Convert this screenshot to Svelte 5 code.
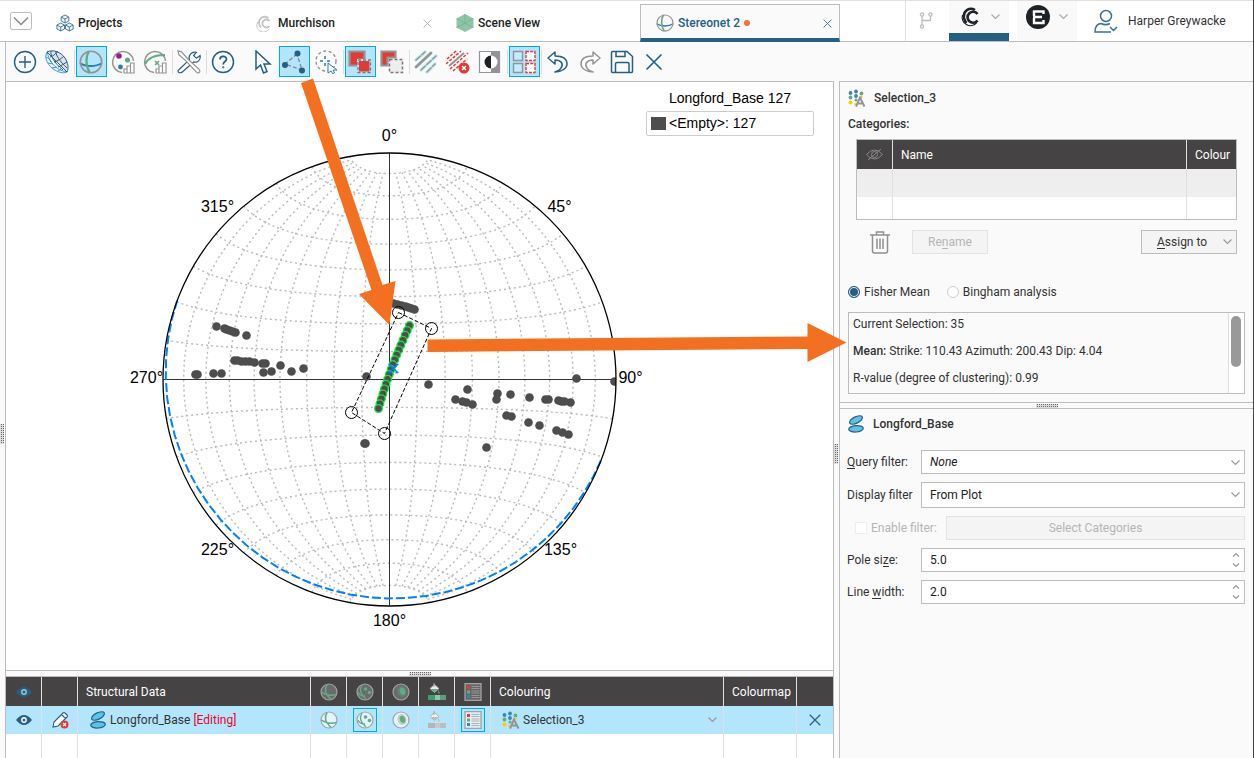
<script>
  const RADIUS = 226.5;
  const MEAN = { strike: 110.43, dip: 4.04 };

  let analysis = $state('fisher');
  let queryFilter = $state('none');
  let displayFilter = $state('plot');
  let poleSize = $state('5.0');
  let lineWidth = $state('2.0');

  const rad = (deg) => (deg * Math.PI) / 180;

  // Lambert equal area, centre at 0,0
  function project(lat, lon) {
    const a = rad(lat);
    const b = rad(lon);
    const k = (RADIUS / Math.SQRT2) * Math.sqrt(2 / (1 + Math.cos(a) * Math.cos(b)));
    return [k * Math.cos(a) * Math.sin(b), -k * Math.sin(a)];
  }

  function toPath(points) {
    return points.map(([x, y], i) => `${i ? 'L' : 'M'}${x.toFixed(1)} ${y.toFixed(1)}`).join('');
  }

  function range(from, to, step) {
    const out = [];
    for (let v = from; v <= to; v += step) out.push(v);
    return out;
  }

  const meridians = range(-80, 80, 10)
    .filter((lon) => lon !== 0)
    .map((lon) => toPath(range(-80, 80, 5).map((lat) => project(lat, lon))));
  const parallels = range(-80, 80, 10)
    .filter((lat) => lat !== 0)
    .map((lat) => toPath(range(-90, 90, 5).map((lon) => project(lat, lon))));

  function greatCircle({ strike, dip }) {
    const s = rad(strike);
    const d = rad(strike + 90);
    return toPath(
      range(-90, 90, 5).map((lat) => {
        const [u, v] = project(lat, 90 - dip);
        return [u * Math.sin(d) - v * Math.sin(s), -u * Math.cos(d) + v * Math.cos(s)];
      })
    );
  }
  const meanPlane = greatCircle(MEAN);

  const labels = [
    { text: '0°', x: 0, y: -239 },
    { text: '45°', x: 170, y: -168 },
    { text: '90°', x: 241, y: 3 },
    { text: '135°', x: 171, y: 175 },
    { text: '180°', x: 0, y: 246 },
    { text: '225°', x: -172, y: 175 },
    { text: '270°', x: -243, y: 3 },
    { text: '315°', x: -172, y: -168 }
  ];

  const poles = [
    [-173, -53], [-165, -51], [-163, -50], [-160, -49], [-157, -48], [-154, -47], [-143, -44],
    [-155, -19], [-152, -19], [-148, -18], [-144, -18], [-140, -18], [-135, -17], [-127, -16],
    [-124, -16], [-126, -7], [-118, -8], [-109, -14], [-98, -8], [-86, -11],
    [-194, -5], [-192, -5], [-176, -6], [-168, -6], [-23, -3], [-25, 64], [-24, 64],
    [4, -76], [8, -75], [12, -74], [16, -73], [19, -72], [22, -71], [25, -70],
    [39, 5], [78, 10], [66, 20], [73, 22], [77, 23], [83, 25], [108, 14], [107, 20],
    [121, 15], [140, 18], [156, 20], [159, 20], [169, 21], [172, 22], [175, 22], [181, 23],
    [187, -1], [225, 2], [117, 36], [122, 37], [139, 43], [150, 46], [167, 51], [173, 53],
    [179, 55], [97, 68]
  ];

  const selected = range(0, 17, 1).map((i) => {
    const t = i / 17;
    return [20 - 31 * t - 2 * Math.sin(Math.PI * t), -54 + 83 * t];
  });
  const lasso = [[9, -67], [42, -51], [-5, 54], [-38, 33]];
</script>

{#snippet chevron(color = '#999')}
  <svg class="chev" width="9" height="6" viewBox="0 0 9 6"><path d="M.5 .5l4 4 4-4" fill="none" stroke={color} stroke-width="1.200" /></svg>
{/snippet}

{#snippet cross(color, size)}
  <svg width={size} height={size} viewBox="0 0 16 16"><path d="M1 1l14 14M15 1L1 15" fill="none" stroke={color} stroke-width="1.6" /></svg>
{/snippet}

{#snippet cubes()}
  <svg width="18" height="18" viewBox="0 0 18 18" fill="#eef4f8" stroke="#3b7196" stroke-width=".9">
    {#each [[9, 1], [4.7, 9], [13.3, 9]] as [x, y]}
      <path d="M{x} {y}l3.8 2v4l-3.8 2-3.8-2v-4zM{x - 3.8} {y + 2}l3.8 2 3.8-2M{x} {y + 4}v4" />
    {/each}
  </svg>
{/snippet}

{#snippet murch()}
  <svg width="18" height="18" viewBox="0 0 18 18" fill="none" stroke="#c4c4c4">
    <path d="M13 15A6.500 6.500 0 0 1 1.800 8" /><path d="M12.500 4C8 1 2.500 4 3 9.500c.2 2 1 3 2 4" stroke-width="1.800" /><path d="M13.500 7a4 4 0 1 0 0 5" stroke-width="1.800" />
  </svg>
{/snippet}

{#snippet cube()}
  <svg width="18" height="18" viewBox="0 0 18 18">
    <path d="M9 0l8.5 4.5v9L9 18 .5 13.500v-9z" fill="#8cc5a8" /><path d="M9 9V0M9 9l8.500 4.500M9 9L.5 13.500M.5 4.500L9 9l8.500-4.500" stroke="#74b394" stroke-width=".8" fill="none" />
  </svg>
{/snippet}

{#snippet net(size)}
  <svg width={size} height={size} viewBox="0 0 24 24" fill="none">
    <path d="M1 13c5 4 16 4 22 0" stroke="#2d7cb0" stroke-width="1.800" />
    <path d="M10 1c-3.500 6-3.500 15 1 22" stroke="#62ab84" stroke-width="2.200" />
    <circle cx="12" cy="12" r="10.700" stroke="#949494" stroke-width="1.600" />
  </svg>
{/snippet}

{#snippet plus()}
  <svg width="24" height="24" viewBox="0 0 24 24" fill="none" stroke="#245f84" stroke-width="1.4"><circle cx="12" cy="12" r="10.500" /><path d="M12 6v12M6 12h12" /></svg>
{/snippet}

{#snippet mesh()}
  <svg width="24" height="24" viewBox="0 0 24 24" fill="none">
    <path d="M2 2c6-3 14 0 18 6 3 5 4 10 1 14z" fill="#dfe2e4" />
    <g stroke="#3f9bd2">
      <path d="M2 2c-3 5 0 12 5 16 5 4 11 6 15 4-7-1-12-5-15-9C4 9 3 5 2 2z" fill="#eaf4fa" />
      <path d="M1 7c3 1 4 3 5 5M3 13l5 1M7 18l5-1M13 21l3-2" />
    </g>
    <g stroke="#245f84">
      <path d="M2 2c6-3 14 0 18 6 3 5 4 10 2 14" />
      <path d="M2 2l20 20M6 1c-1 4 3 12 12 19M11 1c-1 3 4 11 11 17M5 7c4-1 6-4 8-6M9 12c4-1 8-4 10-6M13 17c3-1 7-4 9-5" />
    </g>
  </svg>
{/snippet}

{#snippet bars()}
  <path d="M13 23v-4h3v4zM16 23v-7h3.500v7zM19.500 23V13H23v10z" fill="#fff" stroke="#949494" stroke-width="1.200" />
{/snippet}

{#snippet netChart()}
  <svg width="24" height="24" viewBox="0 0 24 24" fill="none">
    <path d="M11 22.500A10.500 10.500 0 1 1 22.500 11" stroke="#949494" stroke-width="1.500" />
    <circle cx="8" cy="6" r="2.800" fill="#942093" /><circle cx="16.500" cy="10" r="2.600" fill="#62ab84" /><circle cx="9.500" cy="17" r="2.400" fill="#2d7cb0" />
    {@render bars()}
  </svg>
{/snippet}

{#snippet netCurve()}
  <svg width="24" height="24" viewBox="0 0 24 24" fill="none">
    <path d="M11 22.500A10.500 10.500 0 1 1 22.500 11" stroke="#949494" stroke-width="1.500" />
    <path d="M2 14C5 8 12 5 22 5" stroke="#62ab84" stroke-width="2.200" /><path d="M12 11l4 4M16 11l-4 4" stroke="#62ab84" stroke-width="1.600" />
    {@render bars()}
  </svg>
{/snippet}

{#snippet wrench()}
  <svg width="24" height="24" viewBox="0 0 26 26" fill="#fff">
    <path d="M1.500 22l12-11.500C12 6 16 1 21 2.500L18 6l3 3 4-3c1 5-3 8-7 7L5.500 24c-3 1.500-5 0-4-2z" stroke="#245f84" stroke-width="1.300" />
    <path d="M1 1l4 1 7 8 12 11c2 3-1 5-3 3L10 12 2 5z" stroke="#949494" stroke-width="1.300" />
  </svg>
{/snippet}

{#snippet help()}
  <svg width="24" height="24" viewBox="0 0 24 24" fill="none" stroke="#245f84"><circle cx="12" cy="12" r="10.500" stroke-width="1.500" /><path d="M9 9.500c0-4 6.500-4 6.500-.3 0 2.500-3.300 2.300-3.300 5.300" stroke-width="1.800" /><circle cx="12.200" cy="17.300" r=".7" /></svg>
{/snippet}

{#snippet pointer()}
  <svg width="24" height="24" viewBox="0 0 24 24"><path d="M6 1v18l4.500-4 3 8 3.500-1.500-3-7.500h6z" fill="#fff" stroke="#245f84" stroke-width="1.500" /></svg>
{/snippet}

{#snippet polySelect()}
  <svg width="24" height="24" viewBox="0 0 24 24"><path d="M15 4L3 14l17 6z" fill="none" stroke="#888" stroke-width="1.300" stroke-dasharray="4 2" /><g fill="#245f84"><circle cx="15.500" cy="3.500" r="3" /><circle cx="3" cy="15" r="3" /><circle cx="20" cy="20.500" r="3" /></g></svg>
{/snippet}

{#snippet radiusSelect()}
  <svg width="24" height="24" viewBox="0 0 24 24" fill="none">
    <circle cx="12" cy="11" r="10" stroke="#949494" stroke-width="1.400" stroke-dasharray="3 2.500" />
    <path d="M11 6v3M11 13v3M6 11h3M13 11h3" stroke="#2d7cb0" stroke-width="1.500" />
    <path d="M14 13v10l3-2 2 3 1.500-1-1.500-3h4z" fill="#fff" stroke="#2d7cb0" />
  </svg>
{/snippet}

{#snippet addSelect()}
  <svg width="24" height="24" viewBox="0 0 24 24"><path d="M1.500 1.500h15v8h-6v6h-9z" fill="#e53935" stroke="#949494" stroke-width="2.200" /><path d="M10 10h12.500v12.500H10z" fill="#e53935" stroke="#b3e5fc" stroke-width="2" /><path d="M10 10h12.500v12.500H10z" fill="none" stroke="#777" stroke-width="1.300" stroke-dasharray="3 2" /></svg>
{/snippet}

{#snippet replaceSelect()}
  <svg width="24" height="24" viewBox="0 0 24 24"><path d="M1.500 1.500h14v6h-8v8h-6z" fill="#e53935" stroke="#949494" stroke-width="2.200" /><path d="M9.500 9.500h13v13h-13z" fill="#eee" stroke="#777" stroke-width="1.500" stroke-dasharray="3 2" /></svg>
{/snippet}

{#snippet stripes()}
  <svg width="24" height="24" viewBox="0 0 24 24" fill="none" stroke-linecap="round">
    <path d="M2 10L11 2M2 17L17 3M7 20L22 6M13 22l8-8" stroke="#c3ecf0" stroke-width="3.600" />
    <path d="M2 10L11 2M7 20L22 6M13 22l8-8" stroke="#949494" stroke-width="1.400" stroke-dasharray="6 2" /><path d="M2 17L17 3" stroke="#949494" stroke-width="2.400" />
  </svg>
{/snippet}

{#snippet stripesOff()}
  <svg width="24" height="24" viewBox="0 0 24 24" fill="none">
    <path d="M1 9L10 1M0 14L15 1M4 19L22 3M7 21l14-12" stroke="#e53935" stroke-width="1.500" stroke-dasharray="3 1.500" /><path d="M3 16L18 3" stroke="#949494" stroke-width="2" />
    <circle cx="18" cy="18" r="5.500" fill="#e53935" /><path d="M16 16l4 4M20 16l-4 4" stroke="#fff" stroke-width="1.500" />
  </svg>
{/snippet}

{#snippet contrast()}
  <svg width="24" height="24" viewBox="0 0 24 24"><path d="M1.500 1.500h20v21h-20z" fill="#fff" stroke="#949494" stroke-width="1.200" /><path d="M13 1h9v22h-9z" fill="#949494" /><circle cx="13" cy="12" r="6.500" fill="#fff" /><path d="M13 5.500a6.500 6.500 0 0 0 0 13z" fill="#1d2226" /></svg>
{/snippet}

{#snippet tiles()}
  <svg width="24" height="24" viewBox="0 0 24 24"><path d="M1.500 1.500h9v9h-9zM1.500 13.500h9v9h-9z" fill="#c2edfc" stroke="#949494" stroke-width="1.400" /><path d="M14 1.500h9v9h-9zM14 13.500h9v9h-9z" fill="#fff" stroke="#e53935" stroke-width="1.400" stroke-dasharray="3 1.200" /></svg>
{/snippet}

{#snippet undo(color, flip)}
  <svg class:flip width="24" height="24" viewBox="0 0 24 24"><path d="M9 2L2 8l7 6v-4c6 0 9 4 6 8-1 2-3 3-6 4 7 0 12-4 12-8 0-6-6-8-12-8z" fill="#fff" stroke={color} stroke-width="1.500" stroke-linejoin="round" /></svg>
{/snippet}

{#snippet save()}
  <svg width="24" height="24" viewBox="0 0 24 24" fill="none" stroke="#245f84" stroke-width="1.500"><path d="M1.500 2.500q0-1 1-1H17l5.500 5v15q0 1-1 1h-19q-1 0-1-1zM6 2v4.500h9V2M5.500 22v-8q0-1.500 1.500-1.500h10.500q1.500 0 1.500 1.500v8" /></svg>
{/snippet}

{#snippet closeIcon()}
  <svg width="24" height="24" viewBox="0 0 24 24"><path d="M4.500 4.500l15 15M19.500 4.500l-15 15" stroke="#245f84" stroke-width="1.600" /></svg>
{/snippet}
{#snippet netTool()}{@render net(24)}{/snippet}
{#snippet undoIcon()}{@render undo('#245f84', false)}{/snippet}
{#snippet redoIcon()}{@render undo('#949494', true)}{/snippet}

{#snippet tool(label, icon, active = false)}
  <button class="tool" class:active aria-label={label}>{@render icon()}</button>
{/snippet}

{#snippet disks()}
  <svg width="18" height="18" viewBox="0 0 18 18" fill="#5cc3e8" stroke="#245f84" stroke-width="1.200"><ellipse cx="9" cy="5" rx="7" ry="3.200" transform="rotate(-27 9 5)" /><ellipse cx="9" cy="13.800" rx="7.300" ry="3.200" transform="rotate(-4 9 14)" /></svg>
{/snippet}

{#snippet category()}
  <svg width="18" height="18" viewBox="0 0 18 18">
    <g fill="#3585b9"><circle cx="2.500" cy="4" r="1.900" /><circle cx="8" cy="2.500" r="1.900" /><circle cx="8" cy="7" r="1.900" /></g>
    <g fill="#62ab84"><circle cx="2.500" cy="8.500" r="1.900" /><circle cx="13.500" cy="4.500" r="1.900" /><circle cx="8" cy="11" r="1.500" /></g>
    <g fill="#fc0"><circle cx="2.500" cy="13.500" r="2" /><circle cx="13.500" cy="8" r="1.200" /><circle cx="7" cy="15" r="1" /></g>
    <path d="M8 17.500l4-9 4.500 9M9.500 14.500h6" fill="none" stroke="#949494" stroke-width="2" />
  </svg>
{/snippet}

{#snippet eye(ring)}
  <svg width="16" height="10" viewBox="0 0 16 10"><path d="M0 5q8-10 16 0-8 10-16 0z" fill="#245f84" /><circle cx="8" cy="5" r="2.200" fill="#245f84" stroke={ring} stroke-width="1.400" /></svg>
{/snippet}

{#snippet netPlanes(bg)}
  <svg width="18" height="18" viewBox="0 0 18 18" fill="none"><circle cx="9" cy="9" r="8" fill={bg} stroke="#a3a3a3" stroke-width="1.200" /><path d="M7 1.500c-3 5-2 9 4 15M1.500 9c4 3 9 4 15 2.500" stroke="#62ab84" stroke-width="1.500" /></svg>
{/snippet}

{#snippet netPoles(bg)}
  <svg width="18" height="18" viewBox="0 0 18 18" fill="none"><circle cx="9" cy="9" r="8" fill={bg} stroke="#a3a3a3" stroke-width="1.200" /><path d="M6 2c-3 5-1 10 4 14M2 9c1 3 4 4 7 4" stroke="#62ab84" stroke-width="1.300" /><g fill="#62ab84"><circle cx="9.500" cy="6" r="1.800" /><circle cx="13.500" cy="9.500" r="1.800" /></g></svg>
{/snippet}

{#snippet netContour(bg, mid)}
  <svg width="18" height="18" viewBox="0 0 18 18"><circle cx="9" cy="9" r="8" fill={bg} stroke="#a3a3a3" stroke-width="1.200" /><ellipse cx="10" cy="8.500" rx="4.500" ry="5.500" fill={mid} transform="rotate(-15 10 8.500)" /><ellipse cx="10.500" cy="8.500" rx="2.700" ry="3.700" fill="#62ab84" transform="rotate(-15 10 8.500)" /></svg>
{/snippet}

{#snippet fill(on)}
  <svg width="18" height="18" viewBox="0 0 18 18"><path d="M2 5.500l4.500-4L11 5.500l-4.500 4z" fill={on ? '#e5efe9' : '#f0f0f0'} stroke="#a3a3a3" stroke-width=".8" /><path d="M3 6h7l-3.500 3z" fill={on ? '#62ab84' : '#bbb'} /><path d="M6 0v4" stroke="#a3a3a3" /><path d="M10 7q3 3 .5 4z" fill={on ? '#62ab84' : '#bbb'} /><path d="M0 12h7v5H0z" fill={on ? '#3f9a6c' : '#b5b5b5'} /><path d="M7 12h5v5H7z" fill={on ? '#8cc5a8' : '#c8c8c8'} /><path d="M12 12h6v5h-6z" fill={on ? '#5f9c7d' : '#bdbdbd'} /></svg>
{/snippet}

{#snippet legend(bg)}
  <svg width="18" height="18" viewBox="0 0 18 18"><path d="M1 .7h16v16.600H1z" fill={bg} stroke="#a3a3a3" stroke-width="1.300" /><path d="M3 3h3v3H3z" fill="#e53935" /><path d="M3 7.500h3v3H3z" fill="#62ab84" /><path d="M3 12h3v3H3z" fill="#3585b9" /><path d="M7.500 3.500h8M7.500 5.500h8M7.500 8h8M7.500 10h8M7.500 12.500h8M7.500 14.500h8" stroke="#a3a3a3" stroke-width=".8" /></svg>
{/snippet}

{#snippet spin()}
  <svg class="spin" width="8" height="16" viewBox="0 0 8 16"><path d="M1 4.500l3-3 3 3M1 11.500l3 3 3-3" fill="none" stroke="#999" stroke-width="1.200" /></svg>
{/snippet}

<div class="app">
  <header class="tabs">
    <button class="menu" aria-label="Tab list"><svg width="16" height="10" viewBox="0 0 16 10"><path d="M1 1.500l7 7 7-7" fill="none" stroke="#888" stroke-width="1.500" /></svg></button>
    <div class="tab">{@render cubes()}<span>Projects</span></div>
    <div class="tab">{@render murch()}<span>Murchison</span><button class="close" aria-label="Close Murchison">{@render cross('#b0b0b0', 9)}</button></div>
    <div class="tab">{@render cube()}<span>Scene View</span></div>
    <div class="tab current">{@render net(18)}<span>Stereonet 2</span><i class="dirty"></i><button class="close" aria-label="Close Stereonet 2">{@render cross('#3b7196', 9)}</button></div>
    <div class="account">
      <div class="branch">
        <svg width="14" height="17" viewBox="0 0 14 17" fill="none" stroke="#bdbdbd" stroke-width="1.300"><circle cx="3" cy="2.500" r="1.600" /><circle cx="3" cy="14.500" r="1.600" /><circle cx="11.500" cy="2.500" r="1.600" /><path d="M3 4v9M3 8.500h8.500V4" /></svg>
      </div>
      <button class="app-switch on" aria-label="Central">
        <svg width="18" height="20" viewBox="0 0 18 20" fill="none" stroke="#1d2226"><path d="M15.500 16A8.300 8.300 0 0 1 1.500 8" stroke-width="1.200" /><path d="M14 3C9 0 2 3 3 11c.3 2 1 3.500 2.500 5" stroke-width="2.600" /><path d="M16.500 7a5.500 5.500 0 1 0 0 6.500" stroke-width="2.600" /></svg>
        {@render chevron('#aaa')}
      </button>
      <button class="app-switch" aria-label="Evo">
        <svg width="24" height="24" viewBox="0 0 24 24" fill="none"><circle cx="12" cy="12" r="12" fill="#1d2226" /><path d="M17.500 9V6.500H8V11M7 12h9M8 13v5h9.500v-3" stroke="#fff" stroke-width="2.400" /></svg>
        {@render chevron('#aaa')}
      </button>
      <button class="user">
        <svg width="24" height="24" viewBox="0 0 24 24" fill="none" stroke="#3b7196" stroke-width="1.500"><circle cx="12" cy="7" r="5.500" /><path d="M17 23H1q0-8 6-8.500c3 1.500 6 1.500 9 0M16 18l3.500 3.500L23 18" /></svg>
        <span>Harper Greywacke</span>
      </button>
    </div>
  </header>

  <div class="toolbar">
    {@render tool('Add', plus)}
    {@render tool('Rotate net', mesh)}
    <i class="sep"></i>
    {@render tool('Stereonet', netTool, true)}
    {@render tool('Pole statistics', netChart)}
    {@render tool('Plane statistics', netCurve)}
    <i class="sep"></i>
    {@render tool('Options', wrench)}
    <i class="sep"></i>
    {@render tool('Help', help)}
    <i class="space"></i>
    {@render tool('Select', pointer)}
    {@render tool('Polygon selection', polySelect, true)}
    {@render tool('Radius selection', radiusSelect)}
    <i class="sep"></i>
    {@render tool('Add to selection', addSelect, true)}
    {@render tool('Replace selection', replaceSelect)}
    <i class="sep"></i>
    {@render tool('Assign', stripes)}
    {@render tool('Unassign', stripesOff)}
    {@render tool('Invert selection', contrast)}
    <i class="sep"></i>
    {@render tool('Show unselected', tiles, true)}
    <i class="sep"></i>
    {@render tool('Undo', undoIcon)}
    {@render tool('Redo', redoIcon)}
    {@render tool('Save', save)}
    {@render tool('Close', closeIcon)}
  </div>

  <main>
    <div class="split-v outer"><i class="grip-v"></i></div>

    <section class="work">
      <div class="plot">
        <svg class="net" viewBox="-383.5 -297.5 827 588">
          <defs><clipPath id="disc"><circle r={RADIUS} /></clipPath></defs>
          <g class="grid">
            {#each meridians as d}<path {d} />{/each}
            {#each parallels as d}<path {d} />{/each}
          </g>
          <path class="axes" d="M0 -226V226M-226 0H226" />
          <path class="mean-plane" d={meanPlane} />
          <g clip-path="url(#disc)" fill="#4d4d4d">
            {#each poles as [cx, cy]}<circle {cx} {cy} r="4.300" />{/each}
          </g>
          <circle class="rim" r={RADIUS} />
          <g class="selected">
            {#each selected as [cx, cy]}<circle {cx} {cy} r="3.800" />{/each}
          </g>
          <path class="mean-pole" d="M0 -15l8 8M8 -15l-8 8M-1 -15h3M6 -15h3M-1 -7h3M6 -7h3" />
          <polygon class="lasso" points={lasso.join(' ')} />
          {#each lasso as [cx, cy]}<circle class="handle" {cx} {cy} r="6" />{/each}
          {#each labels as l}<text x={l.x} y={l.y}>{l.text}</text>{/each}
        </svg>
        <div class="key">
          <div class="key-title">Longford_Base 127</div>
          <div class="key-box"><i class="swatch"></i>&lt;Empty&gt;: 127</div>
        </div>
      </div>

      <div class="split-h"><i class="grip-h"></i></div>

      <table class="data">
        <colgroup>
          <col class="c36" /><col class="c36" /><col />
          <col class="c36" /><col class="c36" /><col class="c36" /><col class="c36" /><col class="c36" />
          <col /><col class="c73" /><col class="c36" />
        </colgroup>
        <thead>
          <tr>
            <th>{@render eye('#9cc')}</th><th></th><th class="txt">Structural Data</th>
            <th>{@render netPlanes('#6b6b6b')}</th><th>{@render netPoles('#6b6b6b')}</th><th>{@render netContour('#6b6b6b', '#5f8571')}</th>
            <th>{@render fill(true)}</th><th>{@render legend('#666')}</th>
            <th class="txt">Colouring</th><th class="txt">Colourmap</th><th></th>
          </tr>
        </thead>
        <tbody>
          <tr class="sel">
            <td>{@render eye('#fff')}</td>
            <td><svg width="18" height="18" viewBox="0 0 18 18"><path d="M2 16l1-5L12 2q1-1 2 0l2 2q1 1 0 2L7 15zM10.500 3.500l4 4" fill="#fff" stroke="#245f84" stroke-width="1.100" /><circle cx="13.500" cy="13.500" r="4" fill="#e53935" /><path d="M12 12l3 3M15 12l-3 3" stroke="#fff" stroke-width="1.200" /></svg></td>
            <td class="txt name"><div>{@render disks()}<span>Longford_Base <em>[Editing]</em></span></div></td>
            <td>{@render netPlanes('#e4f4fb')}</td>
            <td><button class="toggle" aria-label="Show poles">{@render netPoles('#e4f4fb')}</button></td>
            <td>{@render netContour('#e4f4fb', '#bcd3c8')}</td>
            <td>{@render fill(false)}</td>
            <td><button class="toggle" aria-label="Show legend">{@render legend('#e4eef2')}</button></td>
            <td class="txt pick"><div>{@render category()}<span>Selection_3</span>{@render chevron()}</div></td>
            <td></td>
            <td>{@render cross('#245f84', 12)}</td>
          </tr>
          <tr class="blank">{#each range(1, 11, 1) as n (n)}<td></td>{/each}</tr>
        </tbody>
      </table>
    </section>

    <div class="split-v inner"><i class="grip-v"></i></div>

    <aside>
      <section class="panel analysis">
        <h2>{@render category()}Selection_3</h2>
        <h3>Categories:</h3>
        <table class="cats">
          <colgroup><col class="c36" /><col /><col class="c49" /></colgroup>
          <thead>
            <tr>
              <th><svg width="17" height="13" viewBox="0 0 17 13" fill="none" stroke="#8b8b8b"><path d="M.5 6.500q8-9 16 0-8 9-16 0zM2 12L15 1" /><circle cx="8.500" cy="6.500" r="3" /></svg></th>
              <th class="txt">Name</th><th class="txt">Colour</th>
            </tr>
          </thead>
          <tbody>
            <tr class="odd"><td></td><td></td><td></td></tr>
            <tr class="blank"><td></td><td></td><td></td></tr>
          </tbody>
        </table>
        <div class="actions">
          <button class="trash" aria-label="Delete">
            <svg width="20" height="23" viewBox="0 0 20 23" fill="none" stroke="#909090" stroke-width="1.500"><path d="M0 4h20M6.500 3.500V1h7v2.500M2.500 4.500V20q0 2 2 2h11q2 0 2-2V4.500M7 7.500v10.500M10 7.500v10.500M13 7.500v10.500" /></svg>
          </button>
          <button class="btn rename" disabled>Re<u>n</u>ame</button>
          <button class="btn assign"><span><u>A</u>ssign to</span>{@render chevron()}</button>
        </div>
        <div class="radios">
          <label><input type="radio" value="fisher" bind:group={analysis} />Fisher Mean</label>
          <label><input type="radio" value="bingham" bind:group={analysis} />Bingham analysis</label>
        </div>
        <div class="stats">
          <div class="lines">
            <p>Current Selection: 35</p>
            <p><b>Mean:</b> Strike: 110.43 Azimuth: 200.43 Dip: 4.04</p>
            <p>R-value (degree of clustering): 0.99</p>
          </div>
          <div class="track"><i></i></div>
        </div>
      </section>

      <div class="split-h"><i class="grip-h"></i></div>

      <section class="panel props">
        <h2>{@render disks()}Longford_Base</h2>
        <div class="form">
          <label for="query"><u>Q</u>uery filter:</label>
          <div class="field">
            <select id="query" class="italic" bind:value={queryFilter}><option value="none">None</option></select>
            {@render chevron()}
          </div>
          <label for="display">Display filter</label>
          <div class="field tall">
            <select id="display" bind:value={displayFilter}><option value="plot">From Plot</option></select>
            {@render chevron()}
          </div>
          <div class="enable">
            <label><input type="checkbox" disabled />Enable filter:</label>
            <button class="btn" disabled>Select Categories</button>
          </div>
          <label for="pole">Pole si<u>z</u>e:</label>
          <div class="field">
            <input id="pole" type="text" inputmode="decimal" bind:value={poleSize} />
            {@render spin()}
          </div>
          <label for="line">Line <u>w</u>idth:</label>
          <div class="field">
            <input id="line" type="text" inputmode="decimal" bind:value={lineWidth} />
            {@render spin()}
          </div>
        </div>
      </section>
    </aside>
  </main>

  <svg class="callouts" width="1254" height="758" viewBox="0 0 1254 758" fill="#f37021">
    <path d="M301 83l12-4.500 69.500 206.500 13-4L389.500 325 359 294l12.500-4z" />
    <path d="M427.500 339.500l380-3V323l39 19.500-39 19.500v-13l-380 3z" />
  </svg>
</div>

<style>
  :global(body) { margin: 0; }

  .app {
    --blue: #245f84;
    --line: #bdbdbd;
    position: relative;
    box-sizing: border-box;
    display: flex;
    flex-direction: column;
    height: 100vh;
    overflow: hidden;
    background: #fafafa;
    border-right: 1px solid #444;
    color: #333;
    font: 12px/16px Roboto, sans-serif;
  }

  .app :global(*) { box-sizing: border-box; }
  svg { display: block; flex: none; }
  button, input, select { font: inherit; color: inherit; margin: 0; }
  button { padding: 0; border: 0; background: none; }
  i { font-style: normal; }
  u { text-decoration: none; border-bottom: 1px solid currentColor; display: inline-block; line-height: 12px; }

  /* tabs */
  .tabs {
    display: flex;
    height: 42px;
    flex: none;
    background: #fff;
    border-top: 1px solid #e0e0e0;
    border-bottom: 1px solid var(--line);
  }
  .menu {
    width: 22px;
    height: 18px;
    margin: 11px 8px 0 10px;
    display: grid;
    place-items: center;
    border: 1px solid var(--line);
    border-radius: 2px;
    flex: none;
  }
  .tab {
    display: flex;
    align-items: center;
    gap: 4px;
    width: 200px;
    padding: 4px 8px 0 16px;
    font-weight: 500;
    color: #222;
  }
  .tab.current {
    margin: 3px 0 -1px;
    padding: 3px 7px 0 15px;
    color: var(--blue);
    background: #fafafa;
    border: 1px solid var(--line);
    border-bottom: 4px solid var(--blue);
  }
  .dirty { width: 6px; height: 6px; border-radius: 50%; background: #f4703f; }
  .close { margin-left: auto; }
  .account { display: flex; margin-left: auto; width: 348px; border-left: 1px solid #e0e0e0; }
  .branch { width: 43px; padding: 11px 0 0 13px; }
  .app-switch {
    display: flex;
    align-items: center;
    gap: 12px;
    width: 60px;
    margin-right: 8px;
    padding: 0 0 8px 12px;
    background: #f9f9f9;
  }
  .app-switch:not(.on) { padding: 0 0 8px 9px; gap: 9px; }
  .app-switch.on { border-bottom: 8px solid var(--blue); padding-bottom: 0; }
  .user { display: flex; align-items: center; gap: 10px; padding-left: 9px; }

  /* toolbar */
  .toolbar {
    display: flex;
    gap: 1px;
    height: 39px;
    flex: none;
    align-items: center;
    margin-left: 5px;
    padding-left: 4px;
    border-left: 1px solid var(--line);
  }
  .tool { width: 31px; height: 31px; display: grid; place-content: center start; padding-left: 2px; flex: none; border: 1px solid transparent; }
  .tool.active { background: #b3e5fc; border-color: #00a8f5; }
  .sep { width: 1px; height: 24px; background: #ddd; }
  .space { width: 6px; }
  .flip { transform: scaleX(-1); }

  main { display: flex; flex: 1; min-height: 0; }
  .work { flex: 1; min-width: 0; display: flex; flex-direction: column; border: 1px solid var(--line); border-bottom: 0; }
  .split-v { width: 5px; flex: none; display: grid; place-content: center start; }
  .outer { padding-top: 28px; }
  .inner { padding-top: 68px; }
  .grip-v, .grip-h { background: conic-gradient(#666 25%, #ddd 0) 0 0 / 2px 2px; }
  .grip-v { width: 4px; height: 20px; }
  .grip-h { width: 22px; height: 4px; }
  .split-h { height: 7px; flex: none; display: grid; place-content: center; border: solid var(--line); border-width: 1px 0; }

  /* stereonet */
  .plot { position: relative; flex: 1; min-height: 0; background: #fff; }
  .net { width: 100%; height: 100%; }
  .grid path { fill: none; stroke: #bababa; stroke-width: 1.4px; stroke-dasharray: 2 3; }
  .axes { stroke: #333; fill: none; }
  .rim { fill: none; stroke: #000; stroke-width: 1.3px; }
  .mean-plane { fill: none; stroke: #0080ff; stroke-width: 2px; stroke-dasharray: 9 3; }
  .selected circle { fill: #4d4d4d; stroke: #14e03c; stroke-width: 1.3px; }
  .mean-pole { fill: none; stroke: #0080ff; stroke-width: 1.4px; }
  .lasso { fill: none; stroke: #000; stroke-dasharray: 4 2; }
  .handle { fill: none; stroke: #000; }
  .net text { font: 16px "Liberation Sans", Arial, sans-serif; text-anchor: middle; fill: #000; }
  .key { position: absolute; top: 8px; right: 19px; width: 168px; font: 14px/16px "Liberation Sans", Arial, sans-serif; color: #000; }
  .key-title { text-align: center; }
  .key-box { display: flex; align-items: center; gap: 3px; height: 25px; margin-top: 5px; padding: 0 0 1px 4px; border: 1px solid #ccc; border-radius: 2px; }
  .swatch { width: 15px; height: 13px; background: #4d4d4d; }

  /* tables */
  table { border-collapse: separate; border-spacing: 0; table-layout: fixed; width: 100%; background: #fff; }
  th, td { padding: 0; border-right: 1px solid #e0e0e0; }
  th { height: 29px; background: #454344; color: #fff; font-weight: 400; }
  td { height: 28px; }
  td > svg, th > svg { margin: 0 auto; }
  .txt { text-align: left; padding-left: 8px; }
  .c36 { width: 36px; }
  .c49 { width: 49px; }
  .c73 { width: 73px; }
  .blank td { height: 24px; }
  .data { flex: none; }
  .data th:last-child, .data td:last-child { border-right: 0; }
  .sel td { background: #b3e5fc; }
  .sel .txt div { display: flex; align-items: center; gap: 3px; }
  .name { padding-left: 11px; }
  .pick { padding: 0 6px 0 11px; }
  .pick .chev { margin-left: auto; }
  .name em { font-style: normal; color: #f00026; }
  .toggle { display: grid; place-items: center; width: 24px; height: 24px; margin: 0 auto; border: 1px solid #00a8f5; }

  /* right side */
  aside { display: flex; flex-direction: column; flex: 0 0 414px; border: 1px solid var(--line); border-width: 1px 0 0 1px; }
  .panel { padding: 8px; }
  .props { flex: 1; padding: 7px 8px 8px 7px; }
  h2, h3 { margin: 0; font-size: 12px; font-weight: 500; }
  h2 { display: flex; align-items: center; gap: 8px; height: 16px; }
  h3 { margin-top: 10px; }
  .cats { width: auto; min-width: calc(100% - 16px); margin: 7px 8px 0; border: 1px solid var(--line); }
  .cats .blank td { height: 22px; }
  .cats th:last-child, .cats td:last-child { border-right: 0; }
  .odd td { background: #eee; }
  .actions { display: flex; align-items: center; margin: 10px 8px 0 22px; }
  .btn { height: 24px; background: #f4f4f4; border: 1px solid var(--line); }
  .btn:disabled { color: #b5b5b5; border-color: #e3e3e3; }
  .rename { width: 76px; margin-left: 22px; }
  .assign { display: flex; align-items: center; justify-content: space-between; width: 96px; margin-left: auto; padding: 0 4px 0 15px; }
  .radios { display: flex; gap: 17px; margin-top: 30px; }
  .radios label { display: flex; align-items: center; gap: 4px; }
  input[type='radio'] { appearance: none; width: 12px; height: 12px; border: 1px solid #ccc; border-radius: 50%; background: #fff; }
  input[type='radio']:checked { border-color: var(--blue); background: var(--blue); box-shadow: inset 0 0 0 1px #fff; }
  .stats { display: flex; height: 82px; margin-top: 12px; border: 1px solid var(--line); }
  .lines { flex: 1; padding: 3px 4px; overflow: hidden; }
  .lines p { margin: 0 0 11px; }
  .lines b { font-weight: 500; }
  .track { width: 16px; padding: 3px 2px; background: #fff; border-left: 1px solid #ddd; }
  .track i { display: block; width: 10px; height: 51px; border-radius: 5px; background: #999; }

  .form { display: grid; grid-template-columns: 74px 1fr; row-gap: 8px; align-items: center; margin-top: 18px; }
  .field { position: relative; height: 24px; }
  .field.tall { height: 26px; }
  .field select, .field input { appearance: none; width: 100%; height: 100%; padding: 0 24px 0 8px; border: 1px solid var(--line); border-radius: 0; background: #fff; color: #222; }
  .field .italic { font-style: italic; }
  .field .chev { position: absolute; right: 5px; top: 10px; }
  .field .spin { position: absolute; right: 5px; top: 4px; }
  .enable { grid-column: 1 / -1; display: flex; align-items: center; color: #b5b5b5; }
  .enable label { display: flex; align-items: center; gap: 4px; width: 99px; padding-left: 8px; }
  .enable .btn { flex: 1; }
  input[type='checkbox'] { appearance: none; width: 12px; height: 12px; border: 1px solid #eee; background: #fff; }

  .callouts { position: absolute; top: 0; left: 0; pointer-events: none; }
</style>
